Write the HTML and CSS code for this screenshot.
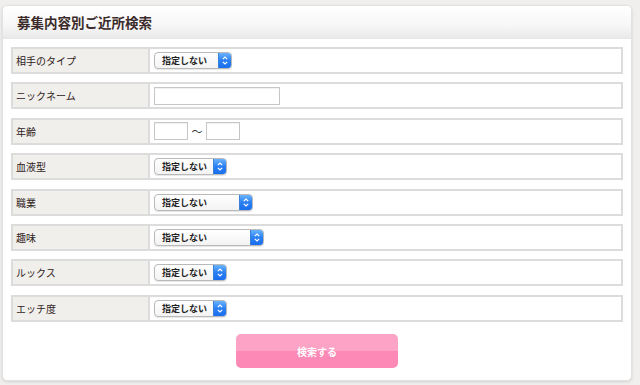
FILE: index.html
```html
<!DOCTYPE html>
<html lang="ja">
<head>
  <meta charset="UTF-8" />
  <title>募集内容別ご近所検索</title>
  <link rel="stylesheet" href="styles.css">
</head>
<body>
  <div class="panel">
    <h2 class="panel-title">募集内容別ご近所検索</h2>

    <form class="search">
      <div class="row">
        <div class="label">相手のタイプ</div>
        <div class="field">
          <div class="select w78">
            <select><option>指定しない</option></select>
            <span class="arrow"><svg viewBox="0 0 13 17"><path d="M4 7 L6.5 4.5 L9 7 M4 10 L6.5 12.5 L9 10"/></svg></span>
          </div>
        </div>
      </div>

      <div class="row">
        <div class="label">ニックネーム</div>
        <div class="field">
          <input class="text nick" type="text">
        </div>
      </div>

      <div class="row">
        <div class="label">年齢</div>
        <div class="field">
          <input class="text age" type="text">
          <span class="tilde">〜</span>
          <input class="text age" type="text">
        </div>
      </div>

      <div class="row">
        <div class="label">血液型</div>
        <div class="field">
          <div class="select w73">
            <select><option>指定しない</option></select>
            <span class="arrow"><svg viewBox="0 0 13 17"><path d="M4 7 L6.5 4.5 L9 7 M4 10 L6.5 12.5 L9 10"/></svg></span>
          </div>
        </div>
      </div>

      <div class="row">
        <div class="label">職業</div>
        <div class="field">
          <div class="select w99">
            <select><option>指定しない</option></select>
            <span class="arrow"><svg viewBox="0 0 13 17"><path d="M4 7 L6.5 4.5 L9 7 M4 10 L6.5 12.5 L9 10"/></svg></span>
          </div>
        </div>
      </div>

      <div class="row">
        <div class="label">趣味</div>
        <div class="field">
          <div class="select w110">
            <select><option>指定しない</option></select>
            <span class="arrow"><svg viewBox="0 0 13 17"><path d="M4 7 L6.5 4.5 L9 7 M4 10 L6.5 12.5 L9 10"/></svg></span>
          </div>
        </div>
      </div>

      <div class="row">
        <div class="label">ルックス</div>
        <div class="field">
          <div class="select w73">
            <select><option>指定しない</option></select>
            <span class="arrow"><svg viewBox="0 0 13 17"><path d="M4 7 L6.5 4.5 L9 7 M4 10 L6.5 12.5 L9 10"/></svg></span>
          </div>
        </div>
      </div>

      <div class="row">
        <div class="label">エッチ度</div>
        <div class="field">
          <div class="select w73">
            <select><option>指定しない</option></select>
            <span class="arrow"><svg viewBox="0 0 13 17"><path d="M4 7 L6.5 4.5 L9 7 M4 10 L6.5 12.5 L9 10"/></svg></span>
          </div>
        </div>
      </div>

      <div class="actions">
        <button class="button" type="button">検索する</button>
      </div>
    </form>
  </div>
</body>
</html>
```

FILE: styles.css
```css
* {
  box-sizing: border-box;
}

body {
  margin: 0;
  padding: 5px 8px 4px 2px;
  background: #f0efee;
  font-family: "Noto Sans CJK JP", "Noto Sans", sans-serif;
  color: #3a2d2d;
}

.panel {
  background: #fff;
  border: 1px solid #e2e2e2;
  border-radius: 5px;
  box-shadow: 0 1px 3px rgba(0, 0, 0, 0.12);
  height: 376px;
  overflow: hidden;
}

.panel-title {
  margin: 0;
  height: 33px;
  padding: 0 14px;
  line-height: 33px;
  font-size: 13.5px;
  font-weight: bold;
  color: #3b2a2a;
  background: linear-gradient(#ffffff, #f7f7f7 60%, #e9e9e9);
  border-bottom: 1px solid #e6e6e6;
}

.search {
  padding: 8px 8px 0;
  display: flex;
  flex-direction: column;
  gap: 8.4px;
}

.row {
  display: flex;
  height: 27px;
  border: 2px solid #dcdcdc;
}

.label {
  width: 137px;
  flex: none;
  background: #f1efeb;
  border-right: 2px solid #dcdcdc;
  padding-left: 3px;
  font-size: 10px;
  line-height: 23px;
  color: #2e2222;
}

.field {
  display: flex;
  align-items: center;
  padding-left: 4px;
}

.select {
  display: inline-flex;
  height: 17px;
  border: 1px solid #b9b9b9;
  border-radius: 4px;
  background: linear-gradient(#ffffff, #f3f3f3);
  box-shadow: 0 1px 1px rgba(0, 0, 0, 0.1);
  overflow: hidden;
}

.w73 { width: 73px; }
.w78 { width: 78px; }
.w99 { width: 99px; }
.w110 { width: 110px; }

.select select {
  appearance: none;
  -webkit-appearance: none;
  flex: 1;
  min-width: 0;
  border: none;
  background: transparent;
  font-family: inherit;
  font-size: 9px;
  font-weight: bold;
  color: #222;
  padding: 0 0 0 7px;
  margin: 0;
  height: 15px;
  line-height: 15px;
}

.arrow {
  flex: none;
  width: 13px;
  background: linear-gradient(#6ab4fd, #2a80f4 50%, #1a6eee);
  border-left: 1px solid #3a7fd8;
  display: flex;
}

.arrow svg {
  width: 13px;
  height: 15px;
  fill: none;
  stroke: #fff;
  stroke-width: 1.3;
}

.text {
  height: 18px;
  border: 1px solid #c6c6c6;
  box-shadow: inset 0 1px 1px rgba(0, 0, 0, 0.06);
  padding: 0 3px;
  font-family: inherit;
  font-size: 10px;
  margin: 0;
}

.nick {
  width: 126px;
}

.age {
  width: 34px;
}

.tilde {
  width: 18px;
  text-align: center;
  font-size: 11px;
  color: #333;
}

.actions {
  display: flex;
  justify-content: center;
  padding-top: 4px;
}

.button {
  width: 162px;
  height: 34px;
  border: none;
  border-radius: 5px;
  background: linear-gradient(#fda3c6 0, #fda3c6 50%, #fd89b6 50%, #fd89b6 100%);
  color: #fff;
  font-family: inherit;
  font-size: 10px;
  font-weight: bold;
}
```
